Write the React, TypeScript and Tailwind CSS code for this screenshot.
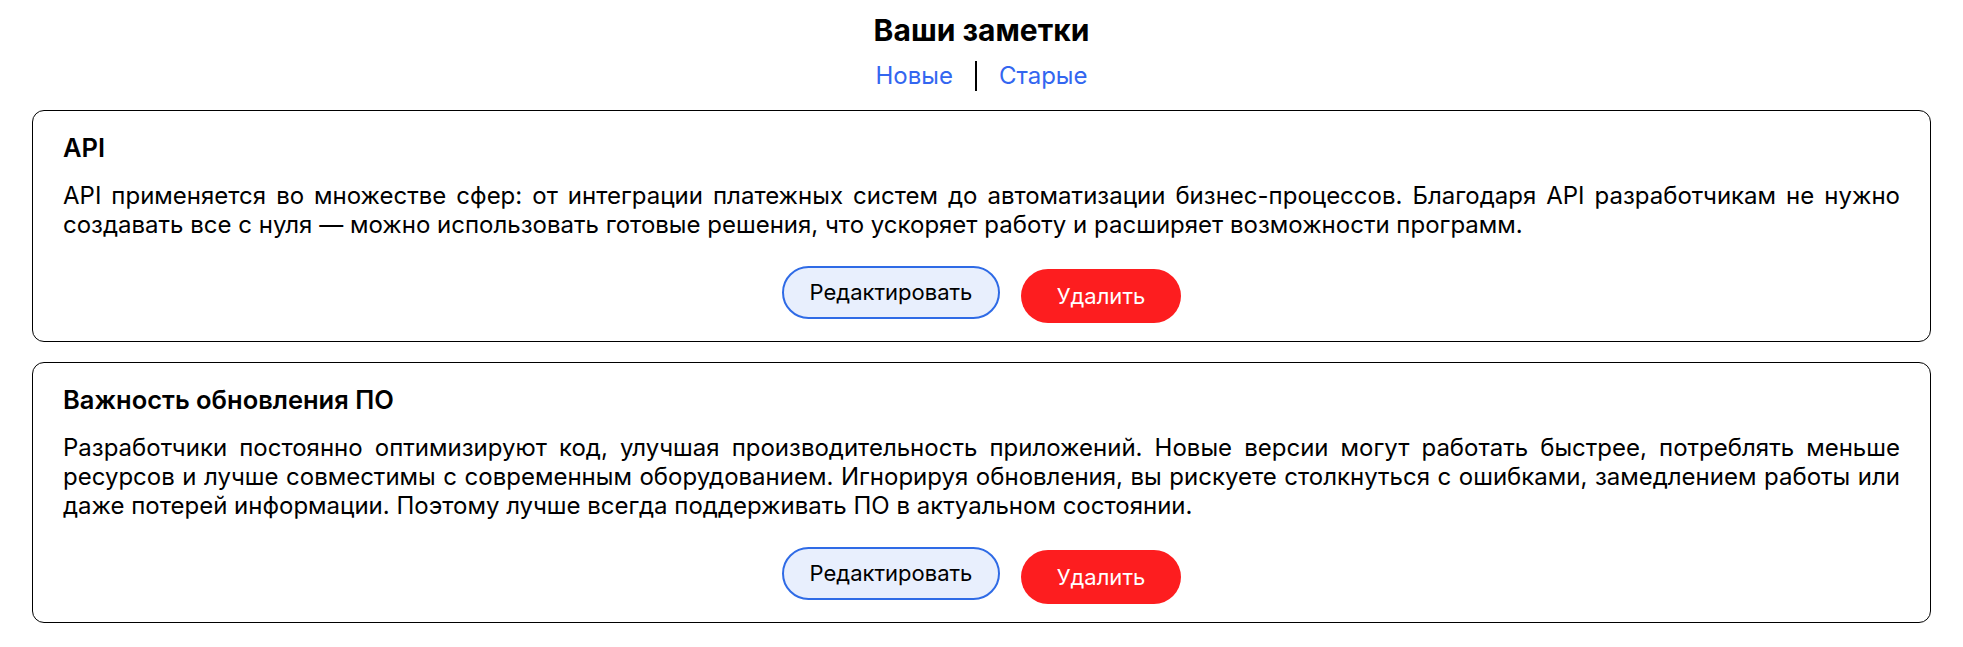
import React from "react";

// заметки — просто статический список для экрана
const notes = [
  {
    title: "API",
    text: "API применяется во множестве сфер: от интеграции платежных систем до автоматизации бизнес-процессов. Благодаря API разработчикам не нужно создавать все с нуля — можно использовать готовые решения, что ускоряет работу и расширяет возможности программ.",
  },
  {
    title: "Важность обновления ПО",
    text: "Разработчики постоянно оптимизируют код, улучшая производительность приложений. Новые версии могут работать быстрее, потреблять меньше ресурсов и лучше совместимы с современным оборудованием. Игнорируя обновления, вы рискуете столкнуться с ошибками, замедлением работы или даже потерей информации. Поэтому лучше всегда поддерживать ПО в актуальном состоянии.",
  },
];

export default function App() {
  return (
    <div className="min-h-screen bg-white text-black font-['Inter','Noto_Sans',sans-serif] pt-[12px]">
      <h1 className="text-center text-[30px] leading-[36px] font-bold">Ваши заметки</h1>
      <nav className="flex justify-center mt-[13px] text-[24px] leading-[30px] text-[#3366f0]">
        <a href="#" className="pr-[22px] border-r-2 border-black">
          Новые
        </a>
        <a href="#" className="pl-[22px]">
          Старые
        </a>
      </nav>
      <div className="mx-8 mt-[19px] flex flex-col gap-[20px]">
        {notes.map((note, i) => (
          <div key={i} className="border border-black rounded-xl px-[30px] pt-[21px] pb-[18px]">
            <h2 className="text-[25.5px] leading-[31px] font-semibold">{note.title}</h2>
            <p className="mt-[18px] text-[24px] leading-[29px] text-justify">{note.text}</p>
            <div className="mt-[27px] flex justify-center items-start gap-[21px]">
              <button className="w-[218px] h-[53px] rounded-full border-2 border-[#2f6be6] bg-[#e8effd] text-[22px] text-black">
                Редактировать
              </button>
              <button className="mt-[3px] w-[160px] h-[54px] rounded-full bg-[#fd1d1f] text-[22px] text-white">
                Удалить
              </button>
            </div>
          </div>
        ))}
      </div>
    </div>
  );
}
